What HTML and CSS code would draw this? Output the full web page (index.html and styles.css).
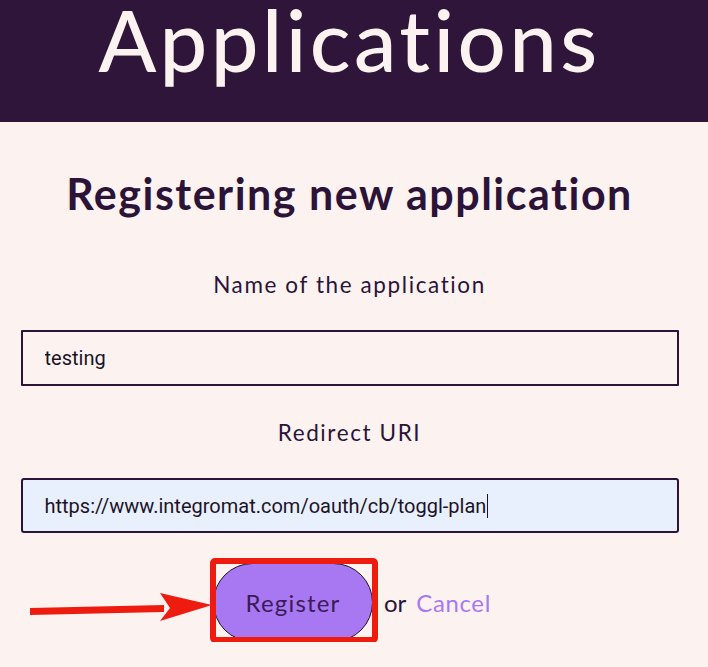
FILE: index.html
```html
<!DOCTYPE html>
<html lang="en">
<head>
  <meta charset="UTF-8" />
  <meta name="viewport" content="width=device-width, initial-scale=1.0" />
  <title>Applications</title>
  <link rel="stylesheet" href="styles.css">
</head>
<body>

  <div class="topbar">
    <h1>Applications</h1>
  </div>

  <div class="page">
    <h2>Registering new application</h2>

    <form class="appform">
      <label class="label" for="appname">Name of the application</label>
      <input class="field" id="appname" type="text" value="testing" />

      <label class="label" for="redirect">Redirect URI</label>
      <div class="field autofill">https://www.integromat.com/oauth/cb/toggl-plan<span class="caret"></span></div>

      <div class="actions">
        <div class="btnwrap">
          <button class="register" type="button">Register</button>
          <span class="highlight"></span>
          <svg class="arrow" width="190" height="36" viewBox="0 0 190 36">
            <polygon points="0,17 134,14 134,21 0,24" fill="#ee1c0e" />
            <polygon points="130,2 182,14 130,30 140,17" fill="#ee1c0e" />
          </svg>
        </div>
        <span class="or">or</span>
        <a class="cancel" href="#">Cancel</a>
      </div>
    </form>
  </div>

</body>
</html>
```

FILE: styles.css
```css
html, body {
  margin: 0;
  background: #fcf3f1;
  font-family: "Lato", "Inter", sans-serif;
  color: #2c1338;
}
.topbar {
  background: #2e1539;
  height: 122px;
  padding-right: 9px;
  display: flex;
  justify-content: center;
}
.topbar h1 {
  margin: 3px 0 0;
  font-size: 85px;
  font-weight: 500;
  line-height: 72px;
  color: #fcf3f1;
  letter-spacing: 3.4px;
}
.page {
  display: flex;
  flex-direction: column;
  align-items: center;
  padding-right: 9px;
}
h2 {
  margin: 46px 0 0;
  font-size: 43px;
  font-weight: 700;
  line-height: 52px;
  letter-spacing: 1.5px;
}
.appform {
  display: flex;
  flex-direction: column;
  align-items: center;
  width: 100%;
}
.label {
  margin-top: 50px;
  font-size: 22.5px;
  line-height: 30px;
  letter-spacing: 1.6px;
}
.label + .field {
  margin-top: 30px;
}
.field {
  box-sizing: border-box;
  width: 658px;
  height: 56px;
  border: 2px solid #2c1338;
  border-radius: 1px;
  background: #fcf3f1;
  padding: 0 22px;
  font-family: "Roboto", "Liberation Sans", sans-serif;
  font-size: 20px;
  color: #1d1326;
  outline: none;
  display: flex;
  align-items: center;
}
.field + .label {
  margin-top: 32px;
}
.autofill {
  background: #e8f0fe;
  border-radius: 3px;
  height: 55px;
}
.caret {
  display: inline-block;
  width: 1px;
  height: 24px;
  margin-left: 1px;
  background: #1d1326;
}
.actions {
  align-self: flex-start;
  display: flex;
  align-items: center;
  margin-top: 30px;
  margin-left: 213px;
  gap: 10px;
}
.btnwrap {
  position: relative;
}
.register {
  display: block;
  width: 160px;
  height: 79px;
  border: 1px solid #1a0f20;
  border-radius: 40px;
  background: #a878f2;
  color: #3b1b57;
  font-family: "Lato", sans-serif;
  font-size: 24px;
  letter-spacing: 1.2px;
}
.highlight {
  position: absolute;
  left: -3px;
  top: -5px;
  width: 156px;
  height: 73px;
  border: 6px solid #ee1c0e;
  border-radius: 5px;
}
.arrow {
  position: absolute;
  left: -183px;
  top: 28px;
}
.or {
  font-size: 24px;
  margin-left: 1px;
}
.cancel {
  font-size: 24px;
  color: #a878f2;
  text-decoration: none;
  letter-spacing: 0.6px;
}
```
